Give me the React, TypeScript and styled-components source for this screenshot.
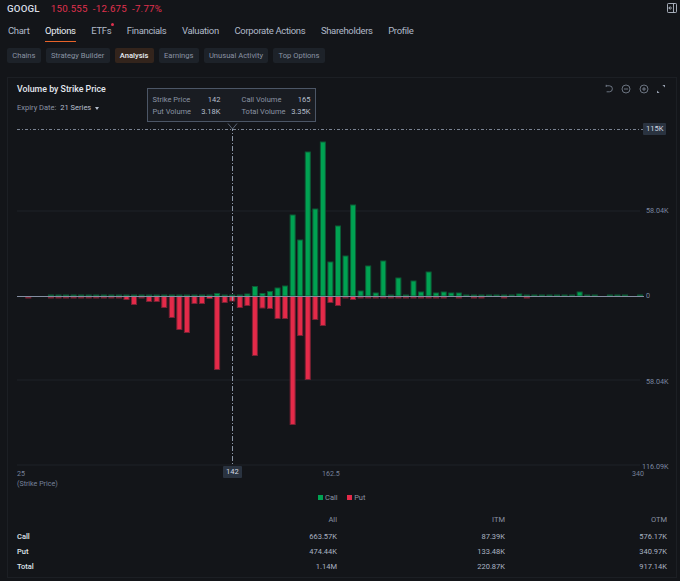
import styled, { createGlobalStyle } from "styled-components";

const GlobalStyle = createGlobalStyle`
  html, body {
    margin: 0;
    padding: 0;
    background: #131519;
  }
  body {
    font-family: "Roboto", "Liberation Sans", sans-serif;
    -webkit-font-smoothing: antialiased;
  }
`;

const navItems = [
  "Chart",
  "Options",
  "ETFs",
  "Financials",
  "Valuation",
  "Corporate Actions",
  "Shareholders",
  "Profile",
];

const subTabs = [
  "Chains",
  "Strategy Builder",
  "Analysis",
  "Earnings",
  "Unusual Activity",
  "Top Options",
];

const rows = [
  { name: "Call", all: "663.57K", itm: "87.39K", otm: "576.17K" },
  { name: "Put", all: "474.44K", itm: "133.48K", otm: "340.97K" },
  { name: "Total", all: "1.14M", itm: "220.87K", otm: "917.14K" },
];

// [call height, put height] in px, one pair per strike
const bars: [number, number][] = [
  [0, 1.5], [0, 0], [0, 0], [1, 1.5], [1, 1.5], [1, 1.5], [1, 1.5], [1, 1.5], [1, 1.5],
  [1, 1.5], [1, 1.5], [1, 1.5], [1, 1.5], [1, 3], [1, 8], [1, 1.5], [1, 5], [1, 5],
  [1.5, 11], [1, 21], [1, 33], [1, 36], [1, 7], [1, 7], [1, 2], [2.5, 73], [1, 6],
  [1, 4.5], [1, 11], [2, 9], [9.5, 59], [2.5, 11.5], [4.5, 12], [8, 22], [10, 22],
  [81, 128], [56, 39], [144, 83], [87, 23], [154, 29], [34, 6], [70, 9], [40, 1], [91, 3],
  [5, 1.5], [30, 1.5], [3, 1.5], [35, 1.5], [1, 1], [18, 1.5], [1, 1], [15, 1.5], [4, 1],
  [24, 1], [3, 1], [4, 1.5], [3, 0], [3, 1.5], [1, 0], [1, 1.5], [1, 1.5], [1, 0], [1, 0],
  [1, 1.5], [1, 0], [2, 0], [1, 1.5], [1, 0], [1, 0], [1, 0], [1, 0], [1, 0], [1, 0],
  [4, 0], [1, 0], [1, 0], [0, 0], [1, 0], [1, 0], [1, 0], [0, 0], [1, 0],
];

const GREEN = "#00a252";
const GREEN_DIM = "#0c5c36";
const RED = "#e42a49";
const RED_DIM = "#7a2234";
const BASE_Y = 176;

function VolumeChart() {
  return (
    <ChartSvg width={669} height={350} viewBox="0 0 669 350">
      <line x1={9} x2={632} y1={91} y2={91} stroke="#1f2228" />
      <line x1={9} x2={632} y1={260} y2={260} stroke="#1f2228" />
      <line x1={9} x2={632} y1={345} y2={345} stroke="#1f2228" />
      {bars.map(([up, down], i) => {
        const x = 20.3 + i * 7.553;
        return (
          <g key={i}>
            {up > 1.5 && (
              <rect
                x={x - 2.5}
                y={BASE_Y - up}
                width={5}
                height={up}
                fill={GREEN}
                stroke={GREEN_DIM}
                strokeWidth={1}
              />
            )}
            {up > 0 && up <= 1.5 && (
              <rect x={x - 3} y={BASE_Y - 1.5} width={6} height={1.5} fill={GREEN_DIM} />
            )}
            {down > 1.5 && (
              <rect
                x={x - 2.5}
                y={BASE_Y + 0.5}
                width={5}
                height={down}
                fill={RED}
                stroke={RED_DIM}
                strokeWidth={1}
              />
            )}
            {down > 0 && down <= 1.5 && (
              <rect x={x - 3} y={BASE_Y + 1} width={6} height={1.5} fill={RED_DIM} />
            )}
          </g>
        );
      })}
      <line x1={9} x2={636} y1={176.5} y2={176.5} stroke="#838da0" />
      <line
        x1={9}
        x2={636}
        y1={9.5}
        y2={9.5}
        stroke="#7a8392"
        strokeDasharray="3 2 1 2"
      />
      <line
        x1={224.5}
        x2={224.5}
        y1={6}
        y2={345}
        stroke="#8d97a8"
        strokeDasharray="5 2 1 2"
      />
      <path d="M220 3.5 L224.5 9 L229 3.5" fill="#131519" stroke="#5a6475" />
    </ChartSvg>
  );
}

function IconButton({ children }: { children: React.ReactNode }) {
  return (
    <ToolIcon width={10} height={10} viewBox="0 0 10 10" fill="none" stroke="#828b9a" strokeWidth={0.8}>
      {children}
    </ToolIcon>
  );
}

export default function App() {
  return (
    <Page>
      <GlobalStyle />
      <QuoteBar>
        <Ticker>GOOGL</Ticker>
        <Price>150.555</Price>
        <Price>-12.675</Price>
        <Price>-7.77%</Price>
        <CollapseIcon width={10} height={10} viewBox="0 0 10 10" fill="none" stroke="#b4bcc9" strokeWidth={0.9}>
          <rect x={0.5} y={0.5} width={9} height={9} rx={0.8} />
          <path d="M6.5 0.5 V9.5" />
          <path d="M5 5 H1.8 M3.3 3.4 L1.8 5 L3.3 6.6" />
        </CollapseIcon>
      </QuoteBar>

      <Nav>
        {navItems.map((item) => (
          <NavItem key={item} $active={item === "Options"}>
            {item}
            {item === "ETFs" && <NavDot />}
          </NavItem>
        ))}
      </Nav>

      <SubTabs>
        {subTabs.map((tab) => (
          <SubTab key={tab} $active={tab === "Analysis"}>
            {tab}
          </SubTab>
        ))}
      </SubTabs>

      <Panel>
        <PanelHead>
          <div>
            <PanelTitle>Volume by Strike Price</PanelTitle>
            <Expiry>
              Expiry Date: <ExpiryValue>21 Series</ExpiryValue>
              <Caret />
            </Expiry>
          </div>
          <Tools>
            <IconButton>
              <path d="M2.2 1.8 H5.4 A3 3 0 0 1 5.4 7.8 H2.6" />
              <path d="M2.2 0.8 V3" />
            </IconButton>
            <IconButton>
              <circle cx={5} cy={5} r={4} />
              <path d="M3 5 H7" />
            </IconButton>
            <IconButton>
              <circle cx={5} cy={5} r={4} />
              <path d="M3 5 H7 M5 3 V7" />
            </IconButton>
            <IconButton>
              <path d="M6.4 1 H9 V3.6 Z" fill="#98a1b0" stroke="none" />
              <path d="M1 6.4 V9 H3.6 Z" fill="#98a1b0" stroke="none" />
            </IconButton>
          </Tools>
        </PanelHead>

        <ChartArea>
          <VolumeChart />
          <Tooltip>
            <TipLabel>Strike Price</TipLabel>
            <TipValue>142</TipValue>
            <TipLabel $second>Call Volume</TipLabel>
            <TipValue>165</TipValue>
            <TipLabel>Put Volume</TipLabel>
            <TipValue>3.18K</TipValue>
            <TipLabel $second>Total Volume</TipLabel>
            <TipValue>3.35K</TipValue>
          </Tooltip>
          <AxisBadge $x={635} $y={3}>115K</AxisBadge>
          <YLabel $y={85}>58.04K</YLabel>
          <YLabel $y={170}>0</YLabel>
          <YLabel $y={256}>58.04K</YLabel>
          <YLabel $y={341} $shift={-4}>116.09K</YLabel>
          <XLabel $x={9} $y={349}>
            25
            <br />
            (Strike Price)
          </XLabel>
          <AxisBadge $x={215} $y={346}>142</AxisBadge>
          <XLabel $x={314} $y={349}>162.5</XLabel>
          <XLabel $x={624} $y={349}>340</XLabel>
        </ChartArea>

        <Legend>
          <LegendItem>
            <Swatch $color={GREEN} />
            Call
          </LegendItem>
          <LegendItem>
            <Swatch $color={RED} />
            Put
          </LegendItem>
        </Legend>

        <SummaryTable>
          <HeadCell />
          <HeadCell>All</HeadCell>
          <HeadCell>ITM</HeadCell>
          <HeadCell>OTM</HeadCell>
          {rows.map((row) => (
            <SummaryRow key={row.name}>
              <RowName>{row.name}</RowName>
              <ValueCell>{row.all}</ValueCell>
              <ValueCell>{row.itm}</ValueCell>
              <ValueCell>{row.otm}</ValueCell>
            </SummaryRow>
          ))}
        </SummaryTable>
      </Panel>
    </Page>
  );
}

const Page = styled.div`
  width: 680px;
  height: 581px;
  overflow: hidden;
  background: #131519;
  color: #c5ccd8;
  display: flex;
  flex-direction: column;
  box-sizing: border-box;
`;

const QuoteBar = styled.div`
  height: 16px;
  display: flex;
  align-items: center;
  padding: 0 3px 0 7px;
  gap: 5px;
`;

const Ticker = styled.span`
  font-size: 9.7px;
  font-weight: 500;
  letter-spacing: 0.2px;
  color: #d8dde6;
  margin-right: 6px;
`;

const Price = styled.span`
  font-size: 9.7px;
  letter-spacing: 0.25px;
  color: #e0314e;
`;

const CollapseIcon = styled.svg`
  margin-left: auto;
`;

const Nav = styled.div`
  display: flex;
  gap: 15.6px;
  padding: 8px 8px 0;
  height: 24px;
  box-sizing: border-box;
`;

const NavItem = styled.div<{ $active?: boolean }>`
  position: relative;
  font-size: 9.5px;
  letter-spacing: -0.33px;
  line-height: 14px;
  color: ${(p) => (p.$active ? "#e8ecf2" : "#b0b9c8")};
  &::after {
    content: "";
    display: ${(p) => (p.$active ? "block" : "none")};
    position: absolute;
    left: 0;
    right: 0;
    bottom: -2px;
    height: 1px;
    background: #e8632a;
  }
`;

const NavDot = styled.span`
  position: absolute;
  top: -1px;
  right: -3px;
  width: 3px;
  height: 3px;
  border-radius: 50%;
  background: #e0314e;
`;

const SubTabs = styled.div`
  display: flex;
  gap: 5px;
  padding: 8px 7px 0;
`;

const SubTab = styled.div<{ $active?: boolean }>`
  height: 15px;
  line-height: 15px;
  padding: 0 5.25px;
  border-radius: 2px;
  font-size: 7.6px;
  font-weight: ${(p) => (p.$active ? 500 : 400)};
  color: ${(p) => (p.$active ? "#e8ecf2" : "#8a93a3")};
  background: ${(p) => (p.$active ? "#33241c" : "#1d2229")};
`;

const Panel = styled.div`
  margin: 14px 3px 0 7px;
  height: 501px;
  box-sizing: border-box;
  border: 1px solid #1c1f24;
  display: flex;
  flex-direction: column;
`;

const PanelHead = styled.div`
  height: 42px;
  display: flex;
  justify-content: space-between;
  padding: 6px 10px 0 9px;
  box-sizing: border-box;
`;

const PanelTitle = styled.div`
  font-size: 8.8px;
  font-weight: 500;
  line-height: 11px;
  color: #e3e7ee;
`;

const Expiry = styled.div`
  margin-top: 8px;
  font-size: 7.5px;
  line-height: 10px;
  color: #8a93a3;
  display: flex;
  align-items: center;
  gap: 3px;
`;

const ExpiryValue = styled.span`
  margin-left: 1px;
  color: #b6bfcd;
`;

const Caret = styled.span`
  margin-left: 1px;
  border-left: 2.5px solid transparent;
  border-right: 2.5px solid transparent;
  border-top: 3px solid #b6bfcd;
`;

const Tools = styled.div`
  display: flex;
  gap: 7.5px;
`;

const ToolIcon = styled.svg`
  display: block;
`;

const ChartArea = styled.div`
  position: relative;
  height: 370px;
`;

const ChartSvg = styled.svg`
  display: block;
`;

const Tooltip = styled.div`
  position: absolute;
  left: 139px;
  top: -32px;
  width: 169px;
  height: 34px;
  box-sizing: border-box;
  padding: 4px 4.5px;
  background: #191c22;
  border: 1px solid #4c5666;
  display: grid;
  grid-template-columns: 46px 22px 65px 25px;
  align-items: center;
  font-size: 7.5px;
  white-space: nowrap;
`;

const TipLabel = styled.span<{ $second?: boolean }>`
  color: #8a93a3;
  margin-left: ${(p) => (p.$second ? "21px" : "0")};
`;

const TipValue = styled.span`
  color: #b6bfcd;
  text-align: right;
`;

const AxisBadge = styled.div<{ $x: number; $y: number }>`
  position: absolute;
  left: ${(p) => p.$x}px;
  top: ${(p) => p.$y}px;
  height: 12px;
  line-height: 12px;
  padding: 0 3px;
  border-radius: 1px;
  background: #2a3340;
  color: #d2d8e2;
  font-size: 7.5px;
`;

const YLabel = styled.div<{ $y: number; $shift?: number }>`
  position: absolute;
  left: ${(p) => 638 + (p.$shift ?? 0)}px;
  top: ${(p) => p.$y}px;
  line-height: 12px;
  color: #7a86a0;
  font-size: 7.2px;
`;

const XLabel = styled.div<{ $x: number; $y: number }>`
  position: absolute;
  left: ${(p) => p.$x}px;
  top: ${(p) => p.$y}px;
  line-height: 10px;
  color: #76829a;
  font-size: 7.1px;
  white-space: nowrap;
`;

const Legend = styled.div`
  display: flex;
  justify-content: center;
  gap: 9px;
  margin-top: 0;
  height: 14px;
  align-items: center;
  padding-right: 1px;
`;

const LegendItem = styled.div`
  display: flex;
  align-items: center;
  gap: 2.5px;
  font-size: 7.5px;
  color: #8a93a3;
`;

const Swatch = styled.span<{ $color: string }>`
  width: 5px;
  height: 5px;
  background: ${(p) => p.$color};
`;

const SummaryTable = styled.div`
  margin-top: 8px;
  padding: 0 9px;
  display: grid;
  grid-template-columns: 200px 120px 168px 162px;
  grid-template-rows: 17px repeat(3, 15px);
  font-size: 7.5px;
  align-items: center;
`;

const HeadCell = styled.div`
  color: #8a93a3;
  text-align: right;
  margin-bottom: 3px;
`;

const SummaryRow = styled.div`
  display: contents;
`;

const RowName = styled.div`
  color: #dfe3ea;
  font-weight: 500;
`;

const ValueCell = styled.div`
  color: #aab3c2;
  text-align: right;
`;
